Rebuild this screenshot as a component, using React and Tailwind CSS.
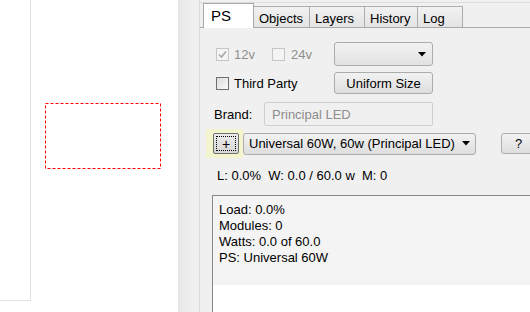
import React from "react";

function Check({ checked, disabled }) {
  return (
    <div
      className={
        "w-[13px] h-[13px] border flex items-center justify-center shrink-0 " +
        (disabled
          ? "border-[#c6c6c6] bg-[#f4f4f4]"
          : "border-[#707070] bg-gradient-to-br from-[#dcdcdc] to-[#fafafa]")
      }
    >
      {checked && (
        <svg width="9" height="9" viewBox="0 0 9 9">
          <path d="M1 4.5 L3.5 7 L8 1.5" fill="none" stroke="#a8a8a8" strokeWidth="1.6" />
        </svg>
      )}
    </div>
  );
}

function Arrow() {
  return (
    <svg width="8" height="5" viewBox="0 0 8 5">
      <path d="M0 0 H8 L4 4.5 Z" fill="#000" />
    </svg>
  );
}

export default function App() {
  const tabs = [
    { t: "Objects", w: "w-[56px]" },
    { t: "Layers", w: "w-[55px]" },
    { t: "History", w: "w-[53px]" },
    { t: "Log", w: "w-[45px]" },
  ];
  return (
    <div className="w-[530px] h-[312px] flex overflow-hidden bg-white font-['Liberation_Sans',Arial,sans-serif] text-[13px] leading-none text-black">
      {/* canvas */}
      <div className="w-[178px] h-full relative bg-white shrink-0">
        <div className="w-[31px] h-[301px] border-r border-b border-[#e2e2e2]" />
        <svg className="absolute left-[45px] top-[103px]" width="117" height="67">
          <rect x="0.5" y="0.5" width="115" height="65" fill="none" stroke="#ff0000" strokeWidth="1" strokeDasharray="3 2" />
        </svg>
      </div>
      {/* splitter */}
      <div className="w-[22px] h-full shrink-0 bg-gradient-to-r from-[#e6e6e6] via-[#eeeeee] to-[#f0f0f0] border-r border-[#dadada]" />
      {/* panel */}
      <div className="flex-1 h-full bg-[#f0f0f0] flex flex-col">
        <div className="mt-[2px] border-t border-[#dcdcdc]" />
        {/* tabs */}
        <div className="flex items-end h-[27px] pl-[3px] border-b border-[#a9a9a9]">
          <div className="h-[25px] -mb-px px-[7px] pt-[4px] bg-white border border-b-0 border-[#a9a9a9] text-[15px] w-[51px] shrink-0">
            PS
          </div>
          {tabs.map(({ t, w }) => (
            <div
              key={t}
              className={
                w +
                " h-[21px] shrink-0 pl-[5px] pt-[5px] bg-gradient-to-b from-[#f2f2f2] to-[#e3e3e3] border border-b-0 border-l-0 border-[#acacac]"
              }
            >
              {t}
            </div>
          ))}
        </div>
        {/* content */}
        <div className="flex flex-col pl-[16px]">
          {/* row 1 */}
          <div className="flex items-center mt-[14px] h-[24px]">
            <div className="w-[118px] flex items-center">
              <Check checked disabled />
              <span className="ml-[5px] text-[#8f8f8f]">12v</span>
              <div className="ml-[17px]">
                <Check disabled />
              </div>
              <span className="ml-[6px] text-[#8f8f8f]">24v</span>
            </div>
            <div className="w-[99px] h-[24px] rounded-[3px] border border-[#acacac] bg-gradient-to-b from-[#f2f2f2] to-[#e2e2e2] flex items-center justify-end pr-[6px]">
              <Arrow />
            </div>
          </div>
          {/* row 2 */}
          <div className="flex items-center mt-[6px] h-[22px]">
            <div className="w-[118px] flex items-center">
              <Check />
              <span className="ml-[5px]">Third Party</span>
            </div>
            <div className="w-[99px] h-[22px] rounded-[3px] border border-[#acacac] bg-gradient-to-b from-[#f2f2f2] to-[#dedede] flex items-center justify-center">
              Uniform Size
            </div>
          </div>
          {/* row 3 */}
          <div className="flex items-center mt-[8px] h-[24px] -ml-[2px]">
            <span className="w-[50px]">Brand:</span>
            <div className="w-[169px] h-[24px] border border-[#cfcfcf] rounded-[2px] flex items-center pl-[7px] text-[#8d8d8d]">
              Principal LED
            </div>
          </div>
          {/* row 4 */}
          <div className="flex items-center mt-[3px] h-[29px] -ml-[10px]">
            <div className="w-[37px] h-[29px] bg-[#f4f4cf] flex items-center pl-[7px] shrink-0">
              <div className="w-[26px] h-[21px] border border-[#707070] rounded-[2px] bg-gradient-to-b from-[#ececec] to-[#d6d6d6] p-[2px]">
                <div className="w-full h-full border border-dotted border-black flex items-center justify-center text-[14px]">
                  +
                </div>
              </div>
            </div>
            <div className="w-[233px] h-[22px] rounded-[3px] border border-[#acacac] bg-gradient-to-b from-[#f2f2f2] to-[#dedede] flex items-center pl-[5px] pr-[5px] justify-between shrink-0">
              <span>Universal 60W, 60w (Principal LED)</span>
              <Arrow />
            </div>
            <div className="ml-[25px] w-[40px] h-[21px] rounded-[3px] border border-[#acacac] bg-gradient-to-b from-[#f2f2f2] to-[#dedede] flex items-center pl-[13px] shrink-0">
              ?
            </div>
          </div>
          {/* row 5 */}
          <div className="mt-[11px] ml-[1px] whitespace-pre">L: 0.0%  W: 0.0 / 60.0 w  M: 0</div>
          {/* textarea */}
          <div className="mt-[13px] -ml-[4px] h-[120px] border border-[#828790] bg-white">
            <div className="h-[89px] bg-[#f4f4f4] pl-[6px] pt-[6px] leading-[16px]">
              <div>Load: 0.0%</div>
              <div>Modules: 0</div>
              <div>Watts: 0.0 of 60.0</div>
              <div>PS: Universal 60W</div>
            </div>
          </div>
        </div>
      </div>
    </div>
  );
}
